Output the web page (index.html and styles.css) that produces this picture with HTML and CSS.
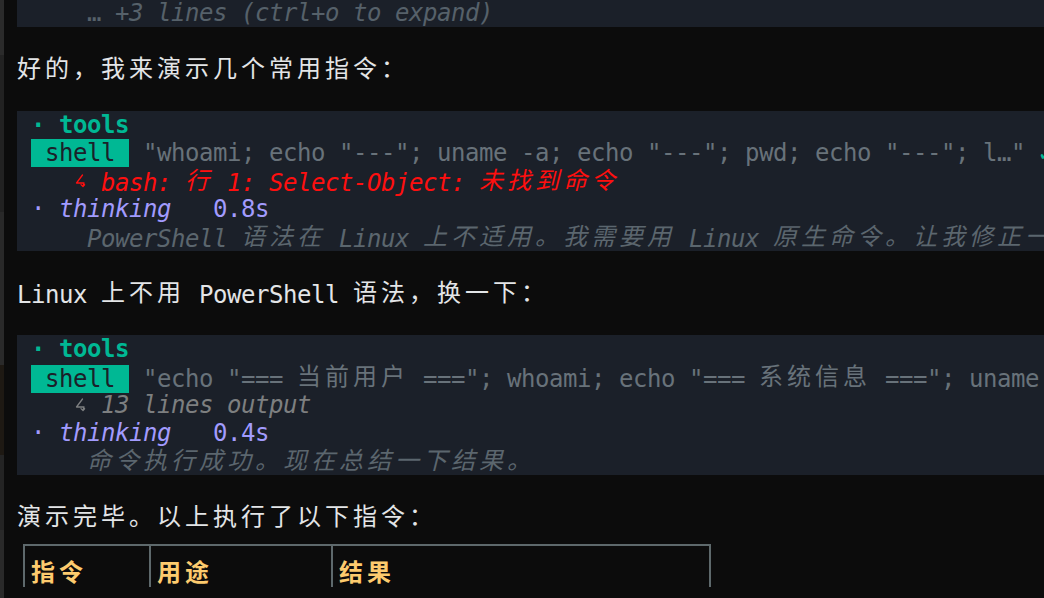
FILE: index.html
```html
<!DOCTYPE html>
<html lang="zh-CN">
<head>
<meta charset="utf-8">
<title>terminal</title>
<link rel="stylesheet" href="styles.css">
</head>
<body>
<div class="screen">
  <div class="gutter">
    <div class="g g1"></div>
    <div class="g g2"></div>
    <div class="g g3"></div>
    <div class="g g4"></div>
    <div class="g g5"></div>
    <div class="g g6"></div>
    <div class="g g7"></div>
  </div>
  <main class="main">
    <section class="block first sp">
      <div class="line muted">     <span class="up">…</span> +3 lines (ctrl+o to expand)</div>
    </section>

    <p class="line text sp"><span class="cj">好的，我来演示几个常用指令：</span></p>

    <section class="block sp">
      <div class="line"> <span class="teal">·</span> <b class="teal">tools</b></div>
      <div class="line"> <span class="badge"> shell </span> <span class="cmd">"whoami; echo "---"; uname -a; echo "---"; pwd; echo "---"; l…"</span> <span class="teal">✓</span></div>
      <div class="line err">    <span class="arr"><svg viewBox="0 0 14 28" width="14" height="28" aria-hidden="true"><path d="M9.5 8 L3.5 16 H11 L10 19.5 M8 17.6 L10 19.5 L11.6 17.8" fill="none" stroke="currentColor" stroke-width="1.3" stroke-linejoin="round" stroke-linecap="round"/></svg></span> bash: <span class="cj">行</span> 1: Select-Object: <span class="cj">未找到命令</span></div>
      <div class="line"> <span class="purple">·</span> <i class="purple">thinking</i>   <span class="purple">0.8s</span></div>
      <div class="line dim">     PowerShell <span class="cj">语法在</span> Linux <span class="cj">上不适用。我需要用</span> Linux <span class="cj">原生命令。让我修正一</span></div>
    </section>

    <p class="line text sp">Linux <span class="cj">上不用</span> PowerShell <span class="cj">语法，换一下：</span></p>

    <section class="block sp">
      <div class="line"> <span class="teal">·</span> <b class="teal">tools</b></div>
      <div class="line"> <span class="badge"> shell </span> <span class="cmd">"echo "=== <span class="cj">当前用户</span> ==="; whoami; echo "=== <span class="cj">系统信息</span> ==="; uname</span></div>
      <div class="line out">    <span class="arr"><svg viewBox="0 0 14 28" width="14" height="28" aria-hidden="true"><path d="M9.5 8 L3.5 16 H11 L10 19.5 M8 17.6 L10 19.5 L11.6 17.8" fill="none" stroke="currentColor" stroke-width="1.3" stroke-linejoin="round" stroke-linecap="round"/></svg></span> 13 lines output</div>
      <div class="line"> <span class="purple">·</span> <i class="purple">thinking</i>   <span class="purple">0.4s</span></div>
      <div class="line dim">     <span class="cj">命令执行成功。现在总结一下结果。</span></div>
    </section>

    <p class="line text"><span class="cj">演示完毕。以上执行了以下指令：</span></p>

    <div class="tbl">
      <div class="th"><span class="cj">指令</span></div>
      <div class="th"><span class="cj">用途</span></div>
      <div class="th"><span class="cj">结果</span></div>
    </div>
  </main>
</div>
</body>
</html>
```
FILE: styles.css
```css
* { box-sizing: border-box; }

html, body {
  margin: 0;
  padding: 0;
  background: #0c0c0c;
}

body {
  width: 1044px;
  height: 598px;
  overflow: hidden;
  font-family: "DejaVu Sans Mono", "Noto Sans CJK SC", monospace;
  font-size: 24px;
  letter-spacing: -0.45px;
  color: #e3e5e7;
}

.screen {
  display: flex;
  height: 598px;
}

.gutter {
  width: 4px;
  flex: none;
  display: flex;
  flex-direction: column;
}

.g1 { height: 55px; background: #2b2b2b; }
.g2 { height: 157px; background: #222222; }
.g3 { height: 88px; background: #292929; }
.g4 { height: 65px; background: #2a2a2a; }
.g5 { height: 90px; background: #1e1913; }
.g6 { height: 75px; background: #242424; }
.g7 { flex: 1; background: #2a2a2a; }

.main {
  flex: 1;
  min-width: 0;
  padding-left: 13px;
  margin-top: -1px;
  display: flex;
  flex-direction: column;
}

.line {
  margin: 0;
  height: 28px;
  line-height: 28px;
  white-space: pre;
}

.sp { margin-bottom: 28px; }

.block { background: #1b2029; }

.cj {
  display: inline-block;
  height: 24px;
  line-height: 24px;
  vertical-align: 2px;
  font-family: "Noto Sans CJK SC", sans-serif;
  font-size: 24px;
  letter-spacing: 4px;
}

.arr {
  display: inline-block;
  width: 14px;
  height: 28px;
  vertical-align: top;
}

.arr svg { display: block; }

.muted { color: #56616a; font-style: italic; }
.muted .up { font-style: normal; }

.teal { color: #00b894; font-weight: bold; }

.badge {
  display: inline-block;
  height: 28px;
  background: #00b894;
  color: #1b2029;
}

.cmd { color: #68727a; }

.err { color: #ff0f0f; font-style: italic; }

.purple { color: #a29bfe; }
i.purple { font-style: italic; }

.dim { color: #5b666e; font-style: italic; }

.out { color: #7d7f80; font-style: italic; }

.tbl {
  display: grid;
  grid-template-columns: 126px 182px 378px;
  width: max-content;
  margin-left: 6px;
  margin-top: 13px;
  border-top: 2px solid #5e696c;
  border-left: 2px solid #5e696c;
}

.th {
  border-right: 2px solid #5e696c;
  padding: 13px 0 0 6px;
  height: 41px;
  line-height: 28px;
  white-space: pre;
  color: #fdcb6e;
}

.th .cj { font-weight: bold; }
```
